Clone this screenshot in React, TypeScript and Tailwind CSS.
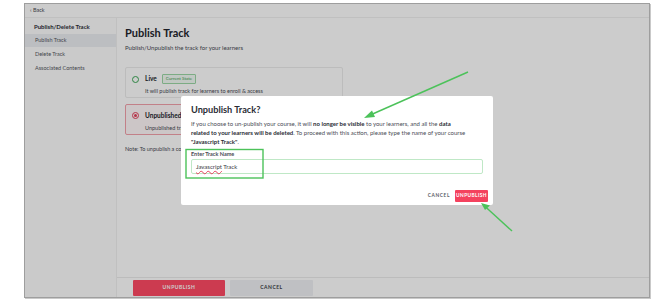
import React from "react";

const font = { fontFamily: "Lato, 'Noto Sans', sans-serif" };

function Sidebar() {
  return (
    <aside className="w-[92px] border-r border-[#f0f0f0] bg-[#fdfdfd] flex flex-col">
      <div className="h-[15px] flex items-center pl-[9px] mt-[1px] text-[6px] font-bold text-[#2d2f38]">
        Publish/Delete Track
      </div>
      <div className="h-[13px] bg-[#eceef2] flex items-center pl-[10px] text-[5.5px] text-[#55575f]">
        Publish Track
      </div>
      <div className="h-[14px] flex items-center pl-[10px] text-[5.5px] text-[#55575f]">
        Delete Track
      </div>
      <div className="h-[14px] flex items-center pl-[10px] text-[5.5px] text-[#55575f]">
        Associated Contents
      </div>
    </aside>
  );
}

function MainPanel() {
  return (
    <main className="flex-1 flex flex-col">
      <div className="flex-1 pl-[8px] pt-[8px]">
        <h1 className="text-[11px] leading-[14px] font-bold text-[#23252d]">Publish Track</h1>
        <p className="mt-[3px] text-[6px] text-[#4a4c55]">Publish/Unpublish the track for your learners</p>

        <div className="mt-[15px] w-[218px] h-[31px] border border-[#ececec] rounded-[2px] pl-[6px] pt-[6px]">
          <div className="flex items-center gap-[4px]">
            <span className="w-[7px] h-[7px] rounded-full border-[1.5px] border-[#3aa655]" />
            <span className="text-[6.5px] font-bold text-[#23252d] ml-[2px]">Live</span>
            <span className="ml-[1px] px-[3px] h-[10px] flex items-center border border-[#9bd7a6] bg-[#f2fbf4] text-[4.5px] text-[#3a9b52] rounded-[1px]">
              Current State
            </span>
          </div>
          <p className="mt-[3px] ml-[13px] text-[5.5px] text-[#4a4c55]">
            It will publish track for learners to enroll &amp; access
          </p>
        </div>

        <div className="mt-[6px] w-[218px] h-[31px] border border-[#f3a1ab] bg-[#fff8f9] rounded-[2px] pl-[6px] pt-[6px]">
          <div className="flex items-center gap-[4px]">
            <span className="w-[7px] h-[7px] rounded-full border-[1.5px] border-[#e5405a] flex items-center justify-center">
              <span className="w-[3px] h-[3px] rounded-full bg-[#e5405a]" />
            </span>
            <span className="text-[6.5px] font-bold text-[#23252d] ml-[2px]">Unpublished</span>
          </div>
          <p className="mt-[3px] ml-[13px] text-[5.5px] text-[#4a4c55]">
            Unpublished tracks will not be visible to learners
          </p>
        </div>

        <p className="mt-[10px] text-[5.5px] text-[#4a4c55]">
          Note: To unpublish a course, make sure there are no active learners enrolled in the track.
        </p>
      </div>
      <div className="border-t border-[#ececec] h-[20px] flex items-start pt-[2px] pl-[16px] gap-[5px]">
        <button className="w-[92px] h-[16px] bg-[#ff4a64] text-white text-[5px] font-bold tracking-[0.5px] rounded-[1px]">
          UNPUBLISH
        </button>
        <button className="w-[83px] h-[16px] bg-[#eff0f4] text-[#3a3c45] text-[5px] font-bold tracking-[0.5px] rounded-[1px]">
          CANCEL
        </button>
      </div>
    </main>
  );
}

function Modal() {
  return (
    <div className="w-[312px] h-[109px] bg-white rounded-[2px] px-[10px] pt-[8px] flex flex-col">
      <h2 className="text-[9.2px] leading-[12px] font-bold text-[#2a2c35]">Unpublish Track?</h2>
      <p className="mt-[3px] text-[6px] leading-[9px] whitespace-nowrap text-[#4a4c55]">
        If you choose to un-publish your course, it will <b className="text-[#2a2c35]">no longer be visible</b> to your learners, and all the{" "}
        <b className="text-[#2a2c35]">data</b>
        <br />
        <b className="text-[#2a2c35]">related to your learners will be deleted</b>. To proceed with this action, please type the name of your course
        <br />
        <b className="text-[#2a2c35]">"Javascript Track"</b>.
      </p>
      <label className="mt-[4px] text-[5.5px] font-bold text-[#4a4c55]">Enter Track Name</label>
      <div className="mt-[1px] h-[15px] border border-[#bfe8c6] rounded-[2px] flex items-center pl-[4px] text-[6px] text-[#3a3c45]">
        <span className="underline decoration-wavy decoration-[#e5405a] decoration-[0.5px]">Javascript</span>
        <span>&nbsp;Track</span>
      </div>
      <div className="mt-auto mb-[3px] -mr-[5px] flex items-center justify-end gap-[5px]">
        <span className="text-[4.8px] font-bold tracking-[0.6px] text-[#5a5c66]">CANCEL</span>
        <button className="w-[33px] h-[12px] bg-[#f4425e] text-white text-[4.8px] font-bold tracking-[0.4px] rounded-[1px]">
          UNPUBLISH
        </button>
      </div>
    </div>
  );
}

function Annotations() {
  return (
    <svg className="absolute inset-0 pointer-events-none" width="670" height="302" viewBox="0 0 670 302">
      <g stroke="#4cc25a" strokeWidth="1.4" fill="none">
        <rect x="186" y="149.5" width="77" height="28.5" />
        <line x1="468" y1="72" x2="368" y2="116" />
        <line x1="512" y1="231" x2="484" y2="205.5" />
      </g>
      <polygon points="364,118 372,110.5 375,117" fill="#4cc25a" />
      <polygon points="481,203 490,205.5 485,210" fill="#4cc25a" />
    </svg>
  );
}

export default function App() {
  return (
    <div className="relative w-[670px] h-[302px] bg-white overflow-hidden" style={font}>
      <div className="ml-[24px] mt-[3px] w-[626px] h-[295px] border border-[#9e9e9e] shadow-[1px_1px_0_#c9c9c9] relative bg-white flex flex-col">
        <div className="h-[14px] border-b border-[#f0f0f0] flex items-center pl-[5px] text-[5.5px] text-[#4a4c55]">
          ‹ Back
        </div>
        <div className="flex-1 flex">
          <Sidebar />
          <MainPanel />
        </div>
        <div className="absolute inset-0 bg-black/20 flex items-center justify-center">
          <Modal />
        </div>
      </div>
      <Annotations />
    </div>
  );
}
